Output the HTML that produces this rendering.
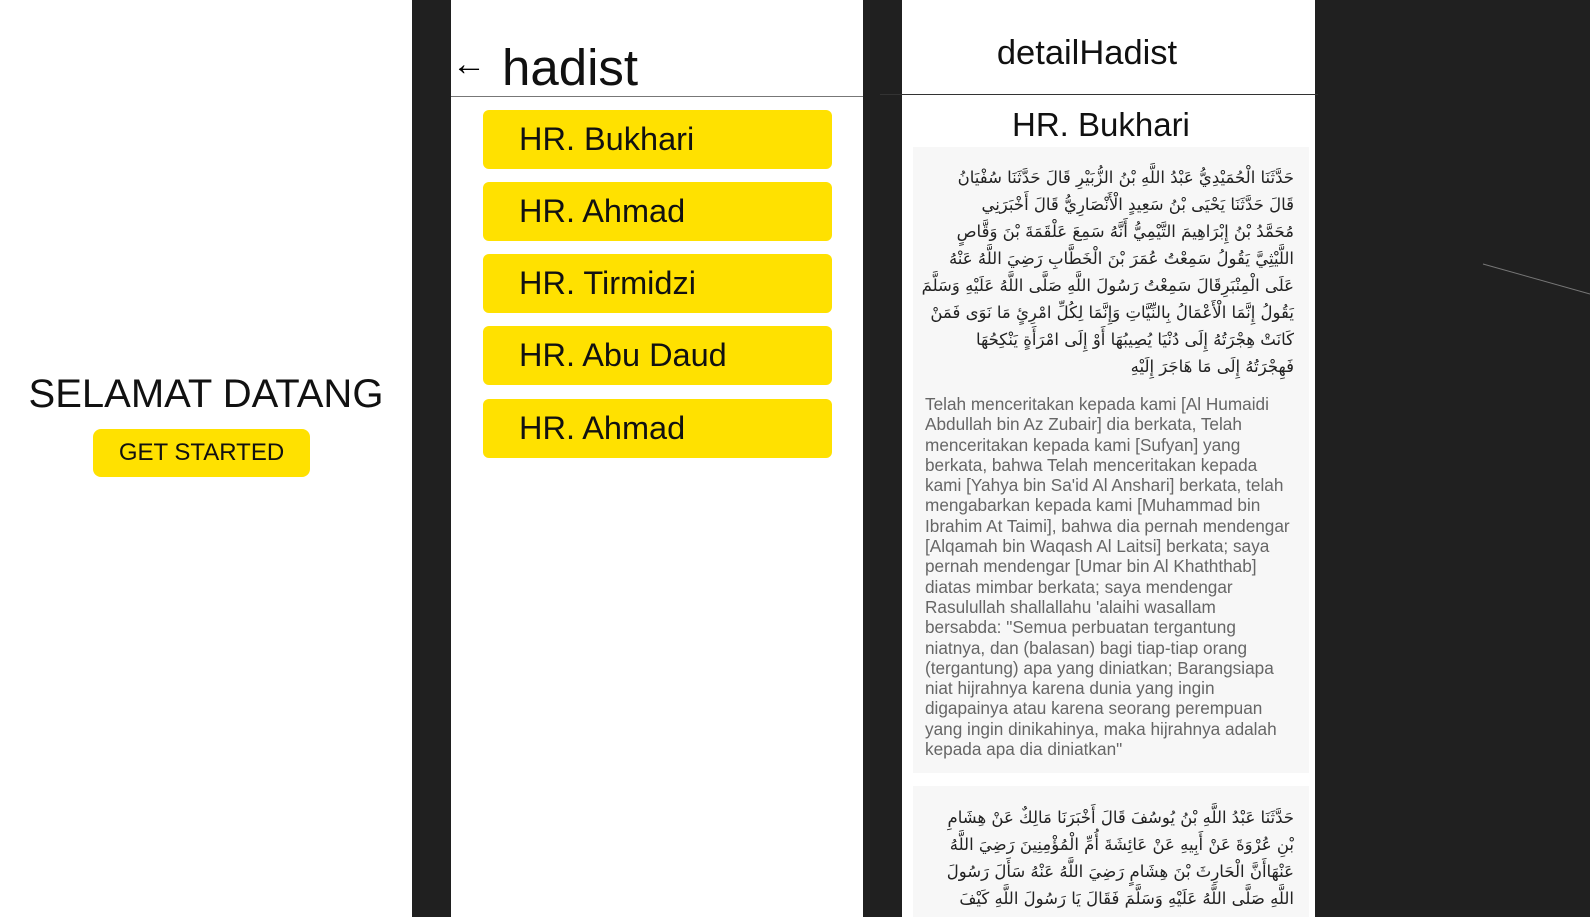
<!DOCTYPE html>
<html style="overflow:hidden;height:917px"><head><meta charset="utf-8"><style>
html,body{overflow:hidden}
body{margin:0;width:1590px;height:917px;background:#202020;position:relative;font-family:"Liberation Sans",sans-serif}
.p{position:absolute;top:0;height:917px;background:#fff;overflow:hidden}
.a{position:absolute;white-space:nowrap}
.btn{position:absolute;left:32px;width:349px;height:59px;background:#ffe100;border-radius:6px;font-size:32.5px;line-height:59px;padding-left:36px;box-sizing:border-box;color:#111}
.card{position:absolute;left:11px;width:396px;background:#f7f7f7;overflow:hidden}
.ar{font-family:"DejaVu Sans",sans-serif;font-size:16.5px;line-height:27px;direction:rtl;text-align:right;padding-right:15px;white-space:nowrap;color:#222}
.la{font-size:17.2px;line-height:20.3px;color:#666;padding-left:12px;white-space:nowrap}
</style></head><body>
<div class="p" style="left:0;width:412px">
<div class="a" style="left:0;width:412px;text-align:center;top:372px;font-size:40px;color:#111">SELAMAT DATANG</div>
<div class="a" style="left:93px;top:429px;width:217px;height:48px;background:#ffe100;border-radius:8px;text-align:center;line-height:48px;font-size:24px;color:#111">GET STARTED</div>
</div>
<div class="p" style="left:451px;width:412px">
<div class="a" style="left:1px;top:45px;font-size:34px;font-weight:300">←</div>
<div class="a" style="left:51px;top:38px;font-size:51px;color:#111">hadist</div>
<div class="a" style="left:0;top:96px;width:412px;height:1px;background:#777"></div>
<div class="btn" style="top:110px">HR. Bukhari</div>
<div class="btn" style="top:182px">HR. Ahmad</div>
<div class="btn" style="top:254px">HR. Tirmidzi</div>
<div class="btn" style="top:326px">HR. Abu Daud</div>
<div class="btn" style="top:399px">HR. Ahmad</div>
</div>
<div class="p" style="left:902px;width:413px">
<div class="a" style="left:0;width:370px;text-align:center;top:34px;font-size:34.5px;color:#111">detailHadist</div>
<div class="a" style="left:110px;top:106px;font-size:33px;color:#111">HR. Bukhari</div>
<div class="card" style="top:147px;height:626px">
<div class="ar" style="margin-top:17px">حَدَّثَنَا الْحُمَيْدِيُّ عَبْدُ اللَّهِ بْنُ الزُّبَيْرِ قَالَ حَدَّثَنَا سُفْيَانُ<br>قَالَ حَدَّثَنَا يَحْيَى بْنُ سَعِيدٍ الْأَنْصَارِيُّ قَالَ أَخْبَرَنِي<br>مُحَمَّدُ بْنُ إِبْرَاهِيمَ التَّيْمِيُّ أَنَّهُ سَمِعَ عَلْقَمَةَ بْنَ وَقَّاصٍ<br>اللَّيْثِيَّ يَقُولُ سَمِعْتُ عُمَرَ بْنَ الْخَطَّابِ رَضِيَ اللَّهُ عَنْهُ<br>عَلَى الْمِنْبَرِقَالَ سَمِعْتُ رَسُولَ اللَّهِ صَلَّى اللَّهُ عَلَيْهِ وَسَلَّمَ<br>يَقُولُ إِنَّمَا الْأَعْمَالُ بِالنِّيَّاتِ وَإِنَّمَا لِكُلِّ امْرِئٍ مَا نَوَى فَمَنْ<br>كَانَتْ هِجْرَتُهُ إِلَى دُنْيَا يُصِيبُهَا أَوْ إِلَى امْرَأَةٍ يَنْكِحُهَا<br>فَهِجْرَتُهُ إِلَى مَا هَاجَرَ إِلَيْهِ</div>
<div class="la" style="margin-top:14px">Telah menceritakan kepada kami [Al Humaidi<br>Abdullah bin Az Zubair] dia berkata, Telah<br>menceritakan kepada kami [Sufyan] yang<br>berkata, bahwa Telah menceritakan kepada<br>kami [Yahya bin Sa'id Al Anshari] berkata, telah<br>mengabarkan kepada kami [Muhammad bin<br>Ibrahim At Taimi], bahwa dia pernah mendengar<br>[Alqamah bin Waqash Al Laitsi] berkata; saya<br>pernah mendengar [Umar bin Al Khaththab]<br>diatas mimbar berkata; saya mendengar<br>Rasulullah shallallahu 'alaihi wasallam<br>bersabda: "Semua perbuatan tergantung<br>niatnya, dan (balasan) bagi tiap-tiap orang<br>(tergantung) apa yang diniatkan; Barangsiapa<br>niat hijrahnya karena dunia yang ingin<br>digapainya atau karena seorang perempuan<br>yang ingin dinikahinya, maka hijrahnya adalah<br>kepada apa dia diniatkan"</div>
</div>
<div class="card" style="top:786px;height:140px">
<div class="ar" style="margin-top:18px">حَدَّثَنَا عَبْدُ اللَّهِ بْنُ يُوسُفَ قَالَ أَخْبَرَنَا مَالِكٌ عَنْ هِشَامِ<br>بْنِ عُرْوَةَ عَنْ أَبِيهِ عَنْ عَائِشَةَ أُمِّ الْمُؤْمِنِينَ رَضِيَ اللَّهُ<br>عَنْهَاأَنَّ الْحَارِثَ بْنَ هِشَامٍ رَضِيَ اللَّهُ عَنْهُ سَأَلَ رَسُولَ<br>اللَّهِ صَلَّى اللَّهُ عَلَيْهِ وَسَلَّمَ فَقَالَ يَا رَسُولَ اللَّهِ كَيْفَ</div>
</div>
</div>
<div class="a" style="left:880px;top:94px;width:438px;height:1px;background:#333"></div>
<svg class="a" style="left:1315px;top:0" width="275" height="917"><line x1="168" y1="264" x2="275" y2="294" stroke="#777" stroke-width="1"/></svg>
</body></html>
